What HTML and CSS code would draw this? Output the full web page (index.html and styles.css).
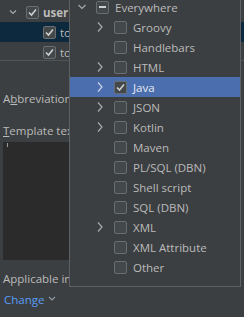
FILE: index.html
```html
<!DOCTYPE html>
<html lang="en">
  <head>
    <meta charset="UTF-8" />
    <title>Live Templates</title>
    <link rel="stylesheet" href="styles.css">
  </head>
  <body>
    <div class="dialog">
      <!-- Template tree -->
      <div class="tree">
        <div class="tree-row">
          <span class="toggle">
            <svg width="12" height="12" viewBox="0 0 12 12"><polyline points="3,4.5 6,7.5 9,4.5" fill="none" stroke="#a9a9a9" stroke-width="1.2"/></svg>
          </span>
          <span class="check checked">
            <svg width="11" height="11" viewBox="0 0 11 11"><polyline points="2,5.5 4.5,8 9,2.5" fill="none" stroke="#cfcfcf" stroke-width="1.6"/></svg>
          </span>
          <span class="tree-label group">user</span>
        </div>
        <div class="tree-row child selected">
          <span class="toggle"></span>
          <span class="check checked">
            <svg width="11" height="11" viewBox="0 0 11 11"><polyline points="2,5.5 4.5,8 9,2.5" fill="none" stroke="#cfcfcf" stroke-width="1.6"/></svg>
          </span>
          <span class="tree-label">todo</span>
        </div>
        <div class="tree-row child">
          <span class="toggle"></span>
          <span class="check checked">
            <svg width="11" height="11" viewBox="0 0 11 11"><polyline points="2,5.5 4.5,8 9,2.5" fill="none" stroke="#cfcfcf" stroke-width="1.6"/></svg>
          </span>
          <span class="tree-label">toStr</span>
        </div>
      </div>

      <!-- Template editor -->
      <div class="form">
        <div class="form-row">A<u>b</u>breviation:</div>
        <div class="form-row label-gap"><u>T</u>emplate text:</div>
        <div class="editor"><span class="caret"></span></div>
        <div class="form-row applicable">Applicable in Java.</div>
        <a href="#" class="change">Change
          <svg width="8" height="6" viewBox="0 0 8 6"><polyline points="1,1 4,4 7,1" fill="none" stroke="#8e9aa8" stroke-width="1.2"/></svg>
        </a>
      </div>

      <!-- Context popup -->
      <div class="popup">
        <div class="opt">
          <span class="toggle"><svg width="12" height="12" viewBox="0 0 12 12"><polyline points="2.5,4 6,7.5 9.5,4" fill="none" stroke="#a9a9a9" stroke-width="1.2"/></svg></span>
          <span class="check partial"><span class="dash"></span></span>
          <span>Everywhere</span>
        </div>
        <div class="opt level1">
          <span class="toggle"><svg width="12" height="12" viewBox="0 0 12 12"><polyline points="4,1.5 8,6 4,10.5" fill="none" stroke="#a9a9a9" stroke-width="1.2"/></svg></span>
          <span class="check"></span><span>Groovy</span>
        </div>
        <div class="opt level1">
          <span class="toggle"></span>
          <span class="check"></span><span>Handlebars</span>
        </div>
        <div class="opt level1">
          <span class="toggle"><svg width="12" height="12" viewBox="0 0 12 12"><polyline points="4,1.5 8,6 4,10.5" fill="none" stroke="#a9a9a9" stroke-width="1.2"/></svg></span>
          <span class="check"></span><span>HTML</span>
        </div>
        <div class="opt level1 selected">
          <span class="toggle"><svg width="12" height="12" viewBox="0 0 12 12"><polyline points="4,1.5 8,6 4,10.5" fill="none" stroke="#c9d3e6" stroke-width="1.2"/></svg></span>
          <span class="check checked"><svg width="11" height="11" viewBox="0 0 11 11"><polyline points="2,5.5 4.5,8 9,2.5" fill="none" stroke="#cfcfcf" stroke-width="1.6"/></svg></span>
          <span>Java</span>
        </div>
        <div class="opt level1">
          <span class="toggle"><svg width="12" height="12" viewBox="0 0 12 12"><polyline points="4,1.5 8,6 4,10.5" fill="none" stroke="#a9a9a9" stroke-width="1.2"/></svg></span>
          <span class="check"></span><span>JSON</span>
        </div>
        <div class="opt level1">
          <span class="toggle"><svg width="12" height="12" viewBox="0 0 12 12"><polyline points="4,1.5 8,6 4,10.5" fill="none" stroke="#a9a9a9" stroke-width="1.2"/></svg></span>
          <span class="check"></span><span>Kotlin</span>
        </div>
        <div class="opt level1">
          <span class="toggle"></span>
          <span class="check"></span><span>Maven</span>
        </div>
        <div class="opt level1">
          <span class="toggle"></span>
          <span class="check"></span><span>PL/SQL (DBN)</span>
        </div>
        <div class="opt level1">
          <span class="toggle"></span>
          <span class="check"></span><span>Shell script</span>
        </div>
        <div class="opt level1">
          <span class="toggle"></span>
          <span class="check"></span><span>SQL (DBN)</span>
        </div>
        <div class="opt level1">
          <span class="toggle"><svg width="12" height="12" viewBox="0 0 12 12"><polyline points="4,1.5 8,6 4,10.5" fill="none" stroke="#a9a9a9" stroke-width="1.2"/></svg></span>
          <span class="check"></span><span>XML</span>
        </div>
        <div class="opt level1">
          <span class="toggle"></span>
          <span class="check"></span><span>XML Attribute</span>
        </div>
        <div class="opt level1">
          <span class="toggle"></span>
          <span class="check"></span><span>Other</span>
        </div>
      </div>
    </div>
  </body>
</html>
```

FILE: styles.css
```css
* {
  margin: 0;
  padding: 0;
  box-sizing: border-box;
}

body {
  width: 244px;
  height: 317px;
  overflow: hidden;
  background-color: #3c3f41;
  color: #bbbbbb;
  font-family: "Open Sans", "Noto Sans", sans-serif;
  font-size: 11.5px;
}

.dialog {
  position: relative;
  height: 317px;
}

/* Tree */
.tree {
  height: 61px;
  padding-top: 2px;
  border-bottom: 1px solid #515456;
  overflow: hidden;
}

.tree-row {
  height: 20px;
  display: flex;
  align-items: center;
  padding-left: 7px;
  white-space: nowrap;
}

.tree-row.child {
  padding-left: 24px;
}

.tree-row.selected {
  background-color: #0d293e;
}

.tree-row .check {
  margin-right: 4px;
}

.tree-label.group {
  font-weight: bold;
}

.toggle {
  width: 12px;
  height: 12px;
  margin-right: 7px;
  flex: none;
  display: flex;
}

.check {
  width: 13px;
  height: 13px;
  flex: none;
  display: flex;
  align-items: center;
  justify-content: center;
  border: 1px solid #6b6e70;
  border-radius: 2px;
  background-color: #43494a;
}

.check.partial .dash {
  width: 7px;
  height: 2px;
  background-color: #cfcfcf;
}

/* Form */
.form {
  padding: 27px 0 0 3px;
}

.form-row {
  height: 20px;
  display: flex;
  align-items: center;
  white-space: nowrap;
}

.label-gap {
  margin-top: 12px;
}

.editor {
  position: relative;
  margin-top: 2px;
  margin-right: 8px;
  height: 118px;
  background-color: #2b2b2b;
}

.caret {
  position: absolute;
  left: 4px;
  top: 1px;
  width: 1px;
  height: 4px;
  background-color: #9a9a9a;
}

.applicable {
  margin-top: 8px;
}

.change {
  height: 20px;
  margin-top: 1px;
  margin-left: 1px;
  display: inline-flex;
  align-items: center;
  gap: 4px;
  color: #589df6;
  text-decoration: none;
}

/* Popup */
.popup {
  position: absolute;
  left: 69px;
  top: -4px;
  width: 172px;
  padding-bottom: 9px;
  background-color: #3c3f41;
  border: 1px solid #5e6163;
}

.opt {
  height: 20px;
  display: flex;
  align-items: center;
  padding-left: 6px;
  white-space: nowrap;
}

.opt.level1 {
  padding-left: 24px;
}

.opt .toggle {
  margin-right: 8px;
}

.opt .check {
  margin-right: 6px;
}

.opt.selected {
  background-color: #4b6eaf;
  color: #e8ecf2;
}
```
